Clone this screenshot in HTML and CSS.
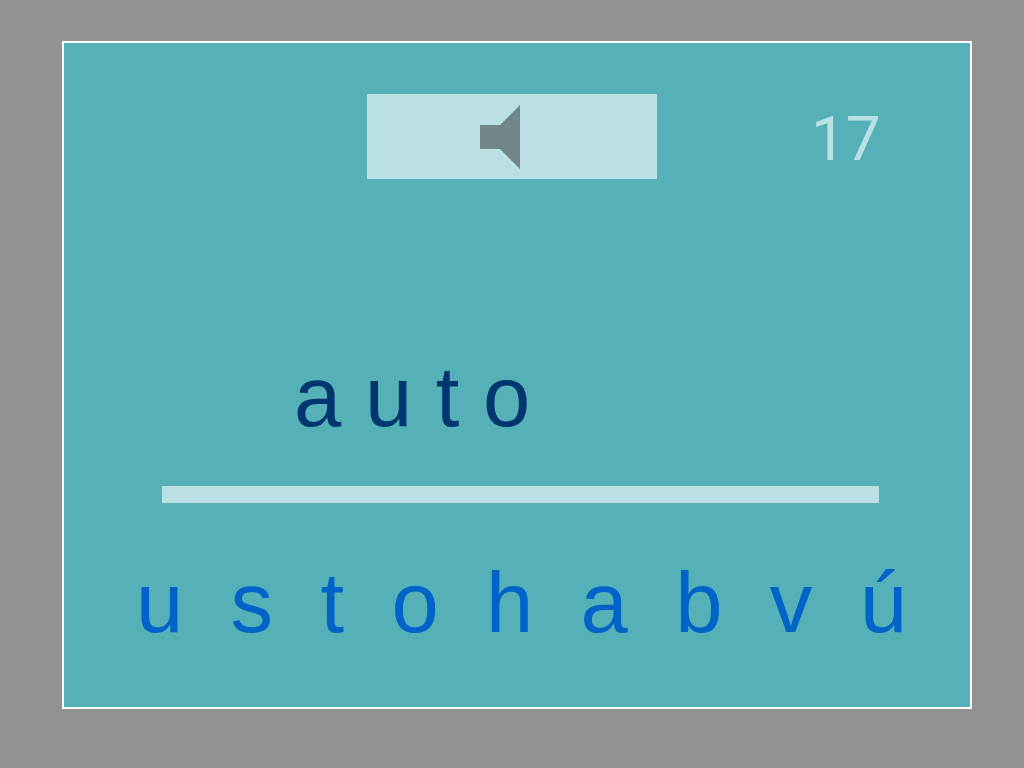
FILE: index.html
```html
<!DOCTYPE html>
<html lang="es">
<head>
<meta charset="utf-8">
<meta name="viewport" content="width=device-width, initial-scale=1">
<title>auto</title>
<link rel="stylesheet" href="styles.css">
</head>
<body>
<main class="panel">
  <header class="top">
    <button class="sound" type="button" aria-label="Escuchar">
      <svg class="speaker" viewBox="0 0 40 64" aria-hidden="true"><path d="M0 20H20L40 0V64L20 44H0Z"/></svg>
    </button>
    <span class="count">17</span>
  </header>
  <p class="word">a u t o</p>
  <hr class="line">
  <div class="letters">
    <button class="letter" type="button">u</button>
    <button class="letter" type="button">s</button>
    <button class="letter" type="button">t</button>
    <button class="letter" type="button">o</button>
    <button class="letter" type="button">h</button>
    <button class="letter" type="button">a</button>
    <button class="letter" type="button">b</button>
    <button class="letter" type="button">v</button>
    <button class="letter" type="button">ú</button>
  </div>
</main>
</body>
</html>
```
FILE: styles.css
```css
* {
  box-sizing: border-box;
}

body {
  margin: 0;
  min-height: 100vh;
  display: flex;
  padding: 41px 52px 59px 62px;
  background: #929292;
  font-family: "Liberation Sans", Arial, sans-serif;
}

.panel {
  flex: 1;
  display: flex;
  flex-direction: column;
  padding-top: 51px;
  border: 2px solid #fff;
  background: #55b0b8;
}

.top {
  display: grid;
  grid-template-columns: 1fr 290px 1fr;
  align-items: center;
  padding-right: 10px;
}

.sound {
  grid-column: 2;
  display: flex;
  align-items: center;
  height: 85px;
  padding: 0 0 0 113px;
  border: 0;
  background: #bae0e3;
  cursor: pointer;
}

.speaker {
  width: 40px;
  height: 64px;
  fill: #708688;
}

.count {
  padding: 4px 0 0 154px;
  color: #bae0e3;
  font-family: Roboto, sans-serif;
  font-size: 62px;
  line-height: 72px;
}

.word {
  margin: 170px 0 0 230px;
  color: #003670;
  font-size: 85px;
  line-height: 96px;
}

.line {
  height: 17px;
  margin: 41px 91px 0 98px;
  border: 0;
  background: #bae0e3;
}

.letters {
  display: flex;
  justify-content: space-between;
  margin: 52px 63px 0 72px;
}

.letter {
  padding: 0;
  border: 0;
  background: none;
  color: #0063c8;
  font-family: inherit;
  font-size: 85px;
  line-height: 96px;
  cursor: pointer;
}
```
